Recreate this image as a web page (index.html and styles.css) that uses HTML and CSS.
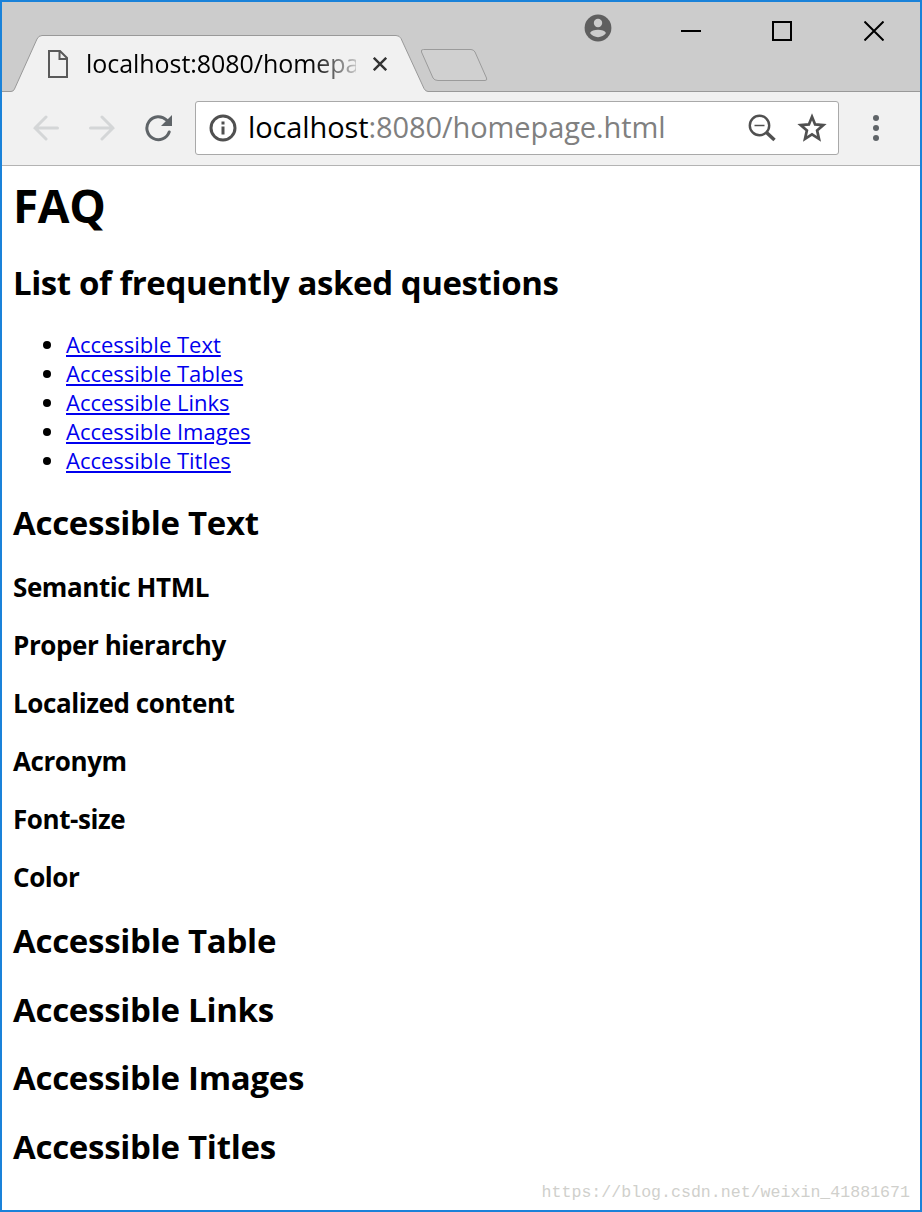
FILE: index.html
```html
<!DOCTYPE html>
<html lang="en">
<head>
    <meta charset="utf-8">
    <title>FAQ</title>
    <link rel="stylesheet" href="styles.css">
</head>
<body>
    <div class="window">
        <div class="titlebar">
            <!-- Tab outline and new tab button -->
            <svg class="tab-shape" viewBox="2 2 918 90" width="918" height="90">
                <path d="M2 91.5H11Q13.5 91.5 14.5 89L37 39Q38.5 35.5 42 35.5H396Q399.5 35.5 401 38.5L424 88.5Q425.5 91.5 428 91.5H920V93H2Z" fill="#f1f1f1"/>
                <path d="M2 91.5H11Q13.5 91.5 14.5 89L37 39Q38.5 35.5 42 35.5H396Q399.5 35.5 401 38.5L424 88.5Q425.5 91.5 428 91.5H920" fill="none" stroke="#999"/>
                <path d="M423.5 49.5H471Q473.5 49.5 475 52L486.5 78Q487.5 80.5 485 80.5H438Q434.5 80.5 433 78L421.5 52Q420.5 49.5 423.5 49.5Z" fill="#d0d0d0" stroke="#9b9b9b"/>
            </svg>
            <div class="tab">
                <svg class="file-icon" width="20" height="28" viewBox="0 0 20 28" fill="none" stroke="#5a5a5a" stroke-width="2">
                    <path d="M1 1H12L19 8V27H1ZM11.5 1V9H19"/>
                </svg>
                <span class="tab-title">localhost:8080/homepa</span>
                <svg class="tab-close" width="14" height="14" viewBox="0 0 14 14" stroke="#333" stroke-width="2.4">
                    <path d="M.8.8L13.2 13.2M13.2.8L.8 13.2"/>
                </svg>
            </div>
            <div class="window-buttons">
                <svg width="28" height="28" viewBox="0 0 28 28">
                    <circle cx="14" cy="14" r="13.4" fill="#5f5f5f"/>
                    <circle cx="14" cy="9" r="4.2" fill="#ccc"/>
                    <path d="M6 19C8 14.8 20 14.8 22 19C18.5 24.5 9.5 24.5 6 19Z" fill="#ccc"/>
                </svg>
                <svg class="minimize" width="20" height="20" viewBox="0 0 20 20"><path d="M0 10H20" stroke="#000" stroke-width="2"/></svg>
                <svg class="maximize" width="20" height="20" viewBox="0 0 20 20"><path d="M1 1H19V19H1Z" fill="none" stroke="#000" stroke-width="2"/></svg>
                <svg class="close" width="20" height="20" viewBox="0 0 20 20"><path d="M.5.5L19.5 19.5M19.5.5L.5 19.5" stroke="#000" stroke-width="2"/></svg>
            </div>
        </div>

        <div class="toolbar">
            <svg class="back" width="26" height="26" viewBox="0 0 26 26" fill="none" stroke="#d4d6d7" stroke-width="3" stroke-linecap="round">
                <path d="M24.5 13H2M13 2L2 13L13 24"/>
            </svg>
            <svg class="forward" width="26" height="26" viewBox="0 0 26 26" fill="none" stroke="#d4d6d7" stroke-width="3" stroke-linecap="round">
                <path d="M1.5 13H24M13 2L24 13L13 24"/>
            </svg>
            <svg class="reload" width="28" height="28" viewBox="0 0 28 28">
                <path d="M22.5 6A11.5 11.5 0 1 0 25.2 18" fill="none" stroke="#5f6468" stroke-width="3" stroke-linecap="round"/>
                <path d="M28 1V12H17Z" fill="#5f6468"/>
            </svg>
            <div class="address">
                <svg width="28" height="28" viewBox="0 0 28 28" fill="none" stroke="#505050" stroke-width="3">
                    <circle cx="14" cy="14" r="12"/>
                    <path d="M14 12.5V20.5M14 7.5V10.5"/>
                </svg>
                <span class="url"><span class="host">localhost</span>:8080/homepage.html</span>
                <svg class="zoom" width="28" height="28" viewBox="0 0 28 28" fill="none" stroke="#505050">
                    <circle cx="11.5" cy="11.5" r="9.7" stroke-width="2.4"/>
                    <path d="M6.5 11.5H16.5" stroke-width="1.5"/>
                    <path d="M18.5 18.5L26.5 26" stroke-width="3.5"/>
                </svg>
                <svg class="star" width="30" height="30" viewBox="0 0 30 30" fill="none" stroke="#505050" stroke-width="2.7">
                    <path d="M15 3.8L18.1 11.4L26.3 12.1L20.1 17.4L22 25.8L15 21.4L8 25.8L9.9 17.4L3.7 12.1L11.9 11.4Z"/>
                </svg>
            </div>
            <svg class="menu" width="6" height="26" viewBox="0 0 6 26" fill="#5f6468">
                <circle cx="3" cy="3" r="3"/>
                <circle cx="3" cy="13" r="3"/>
                <circle cx="3" cy="23" r="3"/>
            </svg>
        </div>

        <div class="page">
            <h1>FAQ</h1>
            <h2 class="subtitle">List of frequently asked questions</h2>
            <ul>
                <li><a href="#text">Accessible Text</a></li>
                <li><a href="#tables">Accessible Tables</a></li>
                <li><a href="#links">Accessible Links</a></li>
                <li><a href="#images">Accessible Images</a></li>
                <li><a href="#titles">Accessible Titles</a></li>
            </ul>
            <h2 id="text">Accessible Text</h2>
            <h3>Semantic HTML</h3>
            <h3>Proper hierarchy</h3>
            <h3>Localized content</h3>
            <h3>Acronym</h3>
            <h3>Font-size</h3>
            <h3>Color</h3>
            <h2 id="tables">Accessible Table</h2>
            <h2 id="links">Accessible Links</h2>
            <h2 id="images">Accessible Images</h2>
            <h2 id="titles">Accessible Titles</h2>
        </div>
        <div class="watermark">https://blog.csdn.net/weixin_41881671</div>
    </div>
</body>
</html>
```
FILE: styles.css
```css
* {
    box-sizing: border-box;
}

body {
    margin: 0;
    font-family: "Open Sans", "Noto Sans", sans-serif;
    color: #000;
    background: #fff;
}

svg {
    display: block;
    flex-shrink: 0;
}

.window {
    position: relative;
    width: 922px;
    height: 1212px;
    border: 2px solid #1a82d9;
    overflow: hidden;
}

/* Title bar */
.titlebar {
    position: relative;
    display: flex;
    justify-content: space-between;
    height: 90px;
    background: #ccc;
}

.tab-shape {
    position: absolute;
    top: 0;
    left: 0;
}

.tab {
    position: relative;
    display: flex;
    align-items: center;
    height: 56px;
    margin: 34px 0 0 46px;
}

.tab-title {
    width: 270px;
    margin-left: 18px;
    padding-bottom: 3px;
    white-space: nowrap;
    font-size: 25px;
    letter-spacing: -0.05px;
    line-height: 36px;
    -webkit-mask-image: linear-gradient(to right, #000 225px, transparent 280px);
    mask-image: linear-gradient(to right, #000 225px, transparent 280px);
}

.tab-close {
    margin-left: 17px;
}

.window-buttons {
    position: relative;
    display: flex;
    align-items: center;
    height: 58px;
    padding-right: 36px;
}

.window-buttons svg:first-child {
    margin-bottom: 6px;
}

.minimize {
    margin-left: 69px;
}

.maximize {
    margin-left: 71px;
}

.close {
    margin-left: 72px;
}

/* Toolbar */
.toolbar {
    display: flex;
    align-items: center;
    height: 74px;
    padding: 0 0 2px 31px;
    background: #f1f1f1;
    border-bottom: 1px solid #b3b3b3;
}

.forward {
    margin-left: 30px;
}

.reload {
    margin-left: 29px;
}

.address {
    display: flex;
    align-items: center;
    width: 644px;
    height: 54px;
    margin-left: 23px;
    padding: 0 11px 0 13px;
    background: #fff;
    border: 1px solid #a9a9a9;
    border-radius: 3px;
}

.url {
    flex: 1;
    margin-left: 11px;
    padding-bottom: 1px;
    color: #808080;
    font-size: 29px;
    letter-spacing: -0.1px;
    line-height: 40px;
    white-space: nowrap;
}

.host {
    color: #000;
}

.star {
    margin-left: 21px;
}

.menu {
    margin-left: 34px;
}

/* Page content */
.page {
    padding: 10px 11px 0;
}

h1 {
    margin: 0 0 27px;
    font-size: 46px;
    letter-spacing: -0.4px;
    line-height: 58px;
}

h2 {
    margin: 0 0 24.7px;
    font-size: 33px;
    letter-spacing: -0.28px;
    line-height: 44px;
}

.subtitle {
    margin-bottom: 25px;
    letter-spacing: -0.42px;
}

h3 {
    margin: 0 0 24px;
    font-size: 26px;
    letter-spacing: -0.42px;
    line-height: 34px;
}

h3 + h2 {
    margin-top: 25.3px;
}

ul {
    margin: 0 0 26px;
    padding-left: 53px;
    font-size: 22px;
    line-height: 29px;
}

a {
    color: #00e;
}

.watermark {
    position: absolute;
    right: 10px;
    bottom: 5px;
    color: #d0d0cc;
    font-family: "Liberation Mono", monospace;
    font-size: 16.6px;
    line-height: 24px;
}
```
